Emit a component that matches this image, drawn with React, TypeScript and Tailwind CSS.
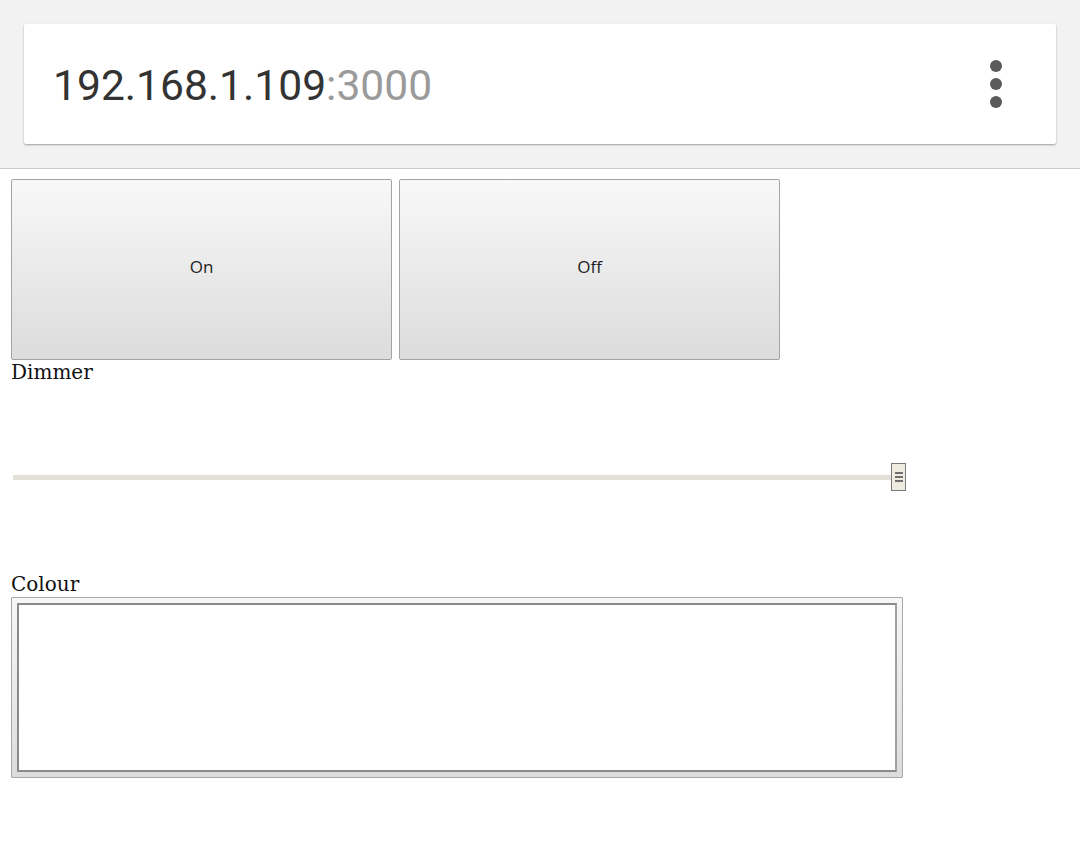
export default function App() {
  return (
    <div className="min-h-[862px] bg-white">
      <div className="h-[169px] border-b-[1px] border-[#c9c9c9] bg-[#f2f2f2] px-[24px] pt-[24px]">
        <div className="flex h-[120px] items-center justify-between rounded-[2px] bg-white pl-[29px] pr-[54px] pt-[4px] shadow-[0_1px_2px_rgba(0,0,0,0.35)]">
          <div className="font-['Roboto',sans-serif] text-[42.6px]">
            <span className="text-[#333333]">192.168.1.109</span>
            <span className="text-[#9a9a9a]">:3000</span>
          </div>
          <div className="flex flex-col gap-[6px] pb-[4px]">
            <span className="h-[12px] w-[12px] rounded-full bg-[#5a5a5a]" />
            <span className="h-[12px] w-[12px] rounded-full bg-[#5a5a5a]" />
            <span className="h-[12px] w-[12px] rounded-full bg-[#5a5a5a]" />
          </div>
        </div>
      </div>

      <div className="px-[11px] pt-[10px]">
        <div className="flex gap-[7px]">
          <ControlButton label="On" />
          <ControlButton label="Off" />
        </div>

        <p className="font-['DejaVu_Serif',serif] text-[20px] leading-[24px] text-[#111]">
          Dimmer
        </p>

        <div className="mt-[79px] flex h-[28px] w-[895px] items-center">
          <div className="ml-[2px] h-[5px] w-[885px] bg-[#e3dfd9]" />
          <div className="-ml-[7px] flex h-[28px] w-[15px] flex-col items-center justify-center gap-[2px] border-[1px] border-[#7a7a7a] bg-[#eeebe0]">
            <span className="h-[2px] w-[8px] bg-[#6f6f6f]" />
            <span className="h-[2px] w-[8px] bg-[#6f6f6f]" />
            <span className="h-[2px] w-[8px] bg-[#6f6f6f]" />
          </div>
        </div>

        <p className="mt-[81px] font-['DejaVu_Serif',serif] text-[20px] leading-[24px] text-[#111]">
          Colour
        </p>
        <div className="mt-[1px] h-[181px] w-[892px] rounded-[1px] border-[1px] border-[#a8a8a8] bg-gradient-to-b from-[#f7f7f7] to-[#dcdcdc] p-[5px]">
          <div className="h-full w-full border-[2px] border-t-[#8a8a8a] border-l-[#8a8a8a] border-r-[#a0a0a0] border-b-[#8a8a8a] bg-white" />
        </div>
      </div>
    </div>
  );
}

function ControlButton({ label }: { label: string }) {
  return (
    <button
      type="button"
      className="flex h-[181px] w-[381px] items-center justify-center rounded-[2px] border-[1px] border-[#a3a3a3] bg-gradient-to-b from-[#f8f8f8] to-[#dcdcdc] pb-[6px] font-['Open_Sans',sans-serif] text-[17px] text-[#1e1e1e]"
    >
      {label}
    </button>
  );
}
